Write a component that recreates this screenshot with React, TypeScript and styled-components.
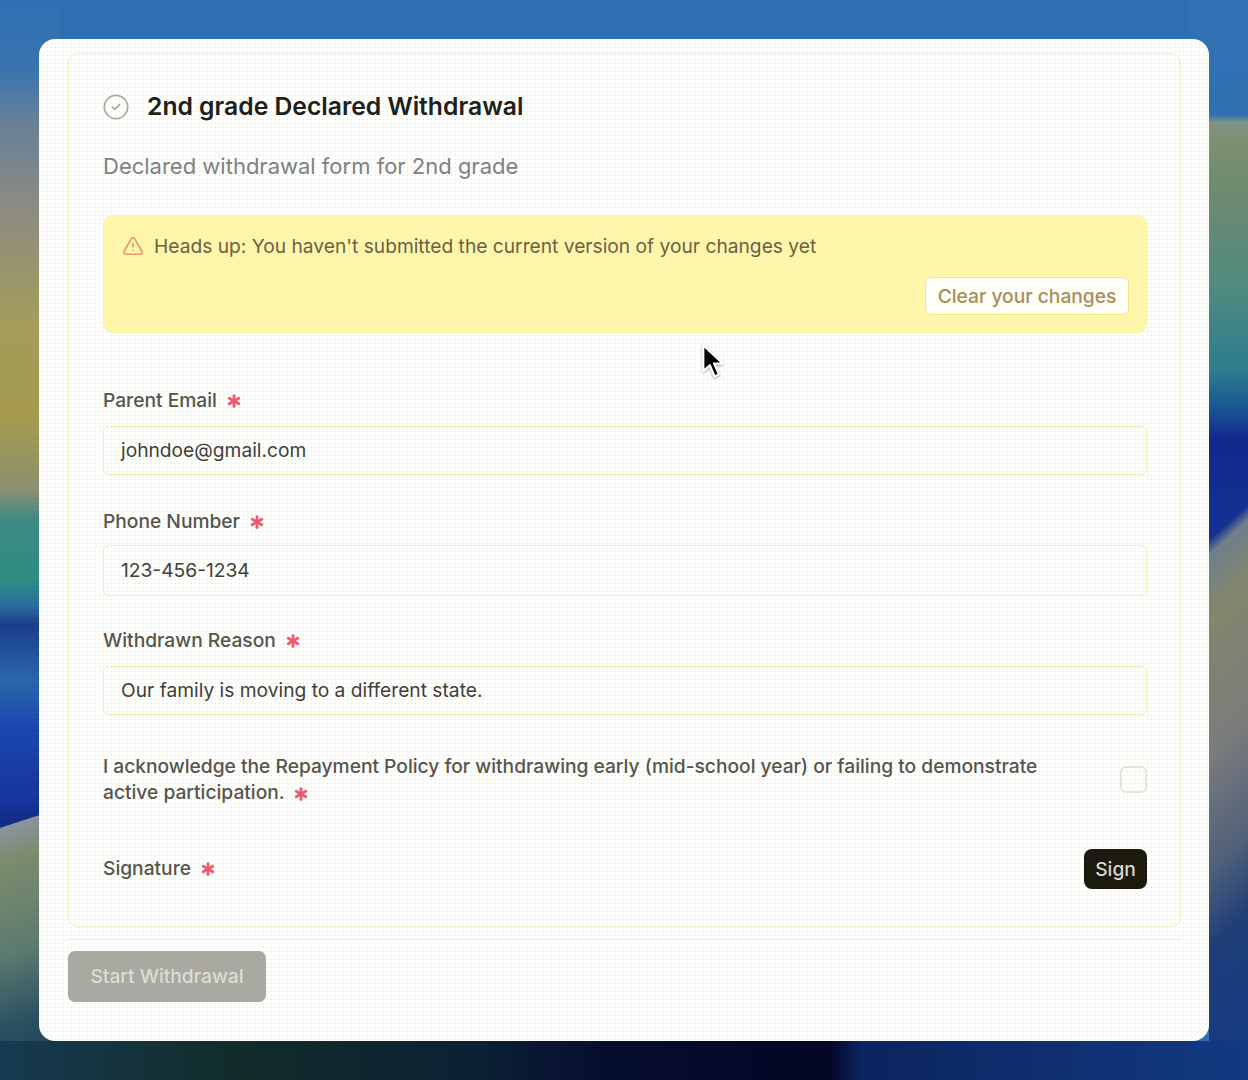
import React from "react";
import styled, { createGlobalStyle } from "styled-components";
import { Asterisk, CircleCheck, TriangleAlert } from "lucide-react";

const Global = createGlobalStyle`
  html, body { margin: 0; padding: 0; }
  body { font-family: Inter, "Liberation Sans", sans-serif; }
`;

const Page = styled.div`
  position: relative;
  width: 1248px;
  height: 1080px;
  box-sizing: border-box;
  padding: 39px 39px;
  overflow: hidden;
  background:
    linear-gradient(90deg, #163a50 0, #122c2a 240px, #0c2034 480px, #060e30 600px, #030624 830px, #0c2460 860px, #123a80 1248px) left bottom / 1248px 39px no-repeat,
    linear-gradient(162deg, transparent 26px, #8a94a0 27px, #7c8c6c 60px, #5c7a70 150px, #2c5262 215px, #1c3a58 285px) left 800px / 60px 280px no-repeat,
    linear-gradient(138deg, transparent 44px, #6f7f8a 56px, #82876c 100px, #7a7c7c 205px, #50607a 290px, #1e3e78 350px, #143a86 470px) right 480px / 39px 600px no-repeat,
    linear-gradient(180deg, #2f70b4 0, #3a74ae 70px, #66809a 120px, #8a8a84 200px, #a49c5c 320px, #a59a4e 420px, #8a9070 490px, #3d8a84 520px, #2f8c80 580px, #2a6ea0 605px, #1a3e8c 625px, #2a66a8 680px, #1b46b0 730px, #16359a 800px, #0f2a80 830px) left top / 60px 840px no-repeat,
    linear-gradient(180deg, #3072b6 0, #3070b0 115px, #7f9388 122px, #7c9070 140px, #6c8a70 200px, #4f8a80 290px, #2d7c90 370px, #1a5a92 405px, #10288c 440px, #123090 500px, #123090 560px) right top / 60px 560px no-repeat,
    #2d6fb2;
`;

const Modal = styled.main`
  box-sizing: border-box;
  width: 1170px;
  height: 1002px;
  padding: 14px 28px 0 29px;
  border-radius: 16px;
  background-color: #fefefc;
  background-image: radial-gradient(circle at 0.5px 0.5px, #ffef5a 0.6px, transparent 0.6px);
  background-size: 4px 4px;
  display: flex;
  flex-direction: column;
`;

const Card = styled.section`
  box-sizing: border-box;
  height: 874px;
  padding: 38px 33px 0 34px;
  border: 1px solid #eeeec4;
  border-radius: 10px;
  display: flex;
  flex-direction: column;
`;

const TitleRow = styled.header`
  display: flex;
  align-items: center;
  gap: 17px;
  height: 30px;
`;

const TitleIcon = styled(CircleCheck)`
  margin-left: -1px;
  color: #a9a9a4;
  flex: none;
`;

const Title = styled.h1`
  margin: -2px 0 0;
  font-size: 24.7px;
  line-height: 30px;
  font-weight: 600;
  color: #20201a;
`;

const Description = styled.p`
  margin: 29px 0 0;
  font-size: 22px;
  line-height: 30px;
  color: #7e8082;
`;

const Alert = styled.div`
  box-sizing: border-box;
  height: 118px;
  margin-top: 34px;
  padding: 17px 17px 0 18px;
  border: 1px solid #fbf09c;
  border-radius: 10px;
  background: #fff6ac;
  display: flex;
  flex-direction: column;
`;

const AlertLine = styled.div`
  display: flex;
  align-items: center;
  gap: 10px;
  height: 26px;
  font-size: 19.2px;
  color: #6c6044;
`;

const AlertIcon = styled(TriangleAlert)`
  color: #e09a6c;
  flex: none;
`;

const ClearButton = styled.button`
  align-self: flex-end;
  box-sizing: border-box;
  width: 204px;
  height: 38px;
  margin-top: 18px;
  padding: 0;
  border: 1.5px solid #f5e583;
  border-radius: 6px;
  background: #fffef6;
  font: 500 19.2px Inter, sans-serif;
  color: #a98c5c;
`;

const Field = styled.div<{ $top: number; $gap: number }>`
  margin-top: ${(p) => p.$top}px;
  display: flex;
  flex-direction: column;
  gap: ${(p) => p.$gap}px;
`;

const Label = styled.label`
  display: flex;
  align-items: center;
  gap: 6px;
  height: 26px;
  font-size: 19.2px;
  font-weight: 500;
  color: #55554c;
`;

const SignLabel = styled(Label)`
  margin-bottom: 2px;
`;

const Req = styled(Asterisk)`
  color: #ee5a6c;
  flex: none;
  position: relative;
  top: 1px;
`;

const InlineReq = styled(Req)`
  display: inline-block;
  vertical-align: middle;
  margin: -4px 0 -4px 5px;
  top: 0;
`;

const Input = styled.div<{ $h: number }>`
  box-sizing: border-box;
  height: ${(p) => p.$h}px;
  padding: 0 17px 2px;
  border: 1.5px solid #eeeeb8;
  border-radius: 6px;
  display: flex;
  align-items: center;
  font-size: 19.2px;
  color: #3f3f38;
`;

const AckRow = styled.div`
  margin-top: 38px;
  display: flex;
  align-items: center;
  justify-content: space-between;
`;

const AckText = styled.div`
  width: 950px;
  font-size: 19.2px;
  font-weight: 500;
  line-height: 26px;
  color: #55554c;
`;

const Checkbox = styled.span`
  box-sizing: border-box;
  display: block;
  width: 27px;
  height: 27px;
  border: 2px solid #e4e4d8;
  border-radius: 6px;
`;

const SignRow = styled.div`
  margin-top: 44px;
  display: flex;
  align-items: center;
  justify-content: space-between;
`;

const SignButton = styled.button`
  width: 63px;
  height: 40px;
  padding: 0;
  border: 0;
  border-radius: 8px;
  background: #1b1a0c;
  font: 500 19.2px Inter, sans-serif;
  color: #d8d8d0;
`;

const Divider = styled.hr`
  width: 100%;
  margin: 12px 0 0;
  border: 0;
  border-top: 1px solid #eeeec0;
`;

const StartButton = styled.button`
  align-self: flex-start;
  width: 198px;
  height: 51px;
  margin-top: 11px;
  padding: 0 0 2px;
  border: 0;
  border-radius: 7px;
  background: #a9a9a2;
  font: 500 19.2px Inter, sans-serif;
  color: #dcdcd6;
`;

const Cursor = styled.svg`
  position: absolute;
  left: 699px;
  top: 342px;
  filter: drop-shadow(0 1px 1px rgba(0, 0, 0, 0.35));
`;

const fields = [
  { label: "Parent Email", value: "johndoe@gmail.com", top: 54, gap: 13, h: 49 },
  { label: "Phone Number", value: "123-456-1234", top: 33, gap: 11, h: 51 },
  { label: "Withdrawn Reason", value: "Our family is moving to a different state.", top: 31, gap: 13, h: 49 },
];

export default function App() {
  return (
    <Page>
      <Global />
      <Modal>
        <Card>
          <TitleRow>
            <TitleIcon size={28} strokeWidth={1.5} />
            <Title>2nd grade Declared Withdrawal</Title>
          </TitleRow>
          <Description>Declared withdrawal form for 2nd grade</Description>
          <Alert>
            <AlertLine>
              <AlertIcon size={22} strokeWidth={1.75} />
              Heads up: You haven't submitted the current version of your changes yet
            </AlertLine>
            <ClearButton type="button">Clear your changes</ClearButton>
          </Alert>
          {fields.map((f) => (
            <Field key={f.label} $top={f.top} $gap={f.gap}>
              <Label>
                {f.label}
                <Req size={22} strokeWidth={3} />
              </Label>
              <Input $h={f.h}>{f.value}</Input>
            </Field>
          ))}
          <AckRow>
            <AckText>
              I acknowledge the Repayment Policy for withdrawing early (mid-school year) or failing to demonstrate
              active participation.
              <InlineReq size={22} strokeWidth={3} />
            </AckText>
            <Checkbox />
          </AckRow>
          <SignRow>
            <SignLabel>
              Signature
              <Req size={22} strokeWidth={3} />
            </SignLabel>
            <SignButton type="button">Sign</SignButton>
          </SignRow>
        </Card>
        <Divider />
        <StartButton type="button">Start Withdrawal</StartButton>
      </Modal>
      <Cursor width="28" height="41" viewBox="0 0 26 38" aria-hidden="true">
        <path d="M4 3 L4 27 L10 21.5 L14.5 32 L18.5 30 L14 20 L22 20 Z" fill="#000" stroke="#fff" strokeWidth="2" strokeLinejoin="round" />
      </Cursor>
    </Page>
  );
}
